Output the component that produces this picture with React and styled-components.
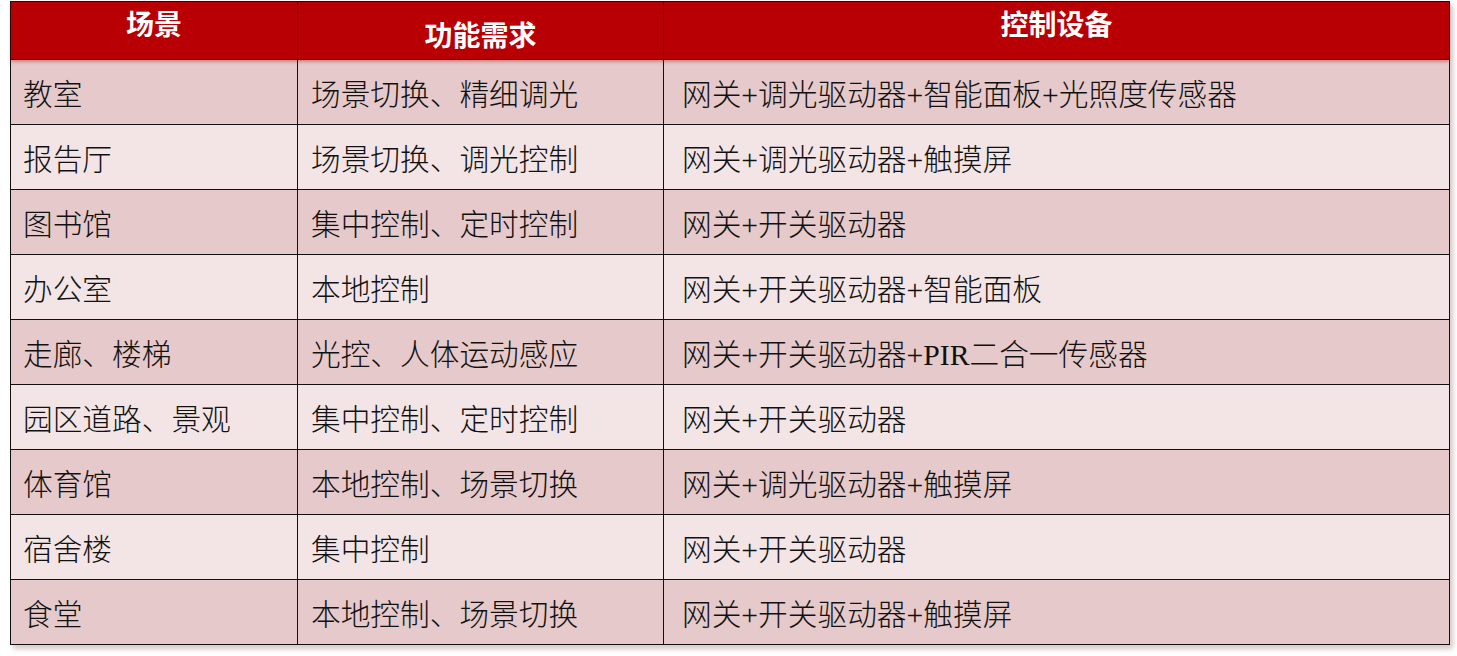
import styled, { createGlobalStyle } from "styled-components"

const GlobalStyle = createGlobalStyle`
  html, body {
    margin: 0;
    padding: 0;
    background: #ffffff;
  }
`

const rows = [
  ["教室", "场景切换、精细调光", "网关+调光驱动器+智能面板+光照度传感器"],
  ["报告厅", "场景切换、调光控制", "网关+调光驱动器+触摸屏"],
  ["图书馆", "集中控制、定时控制", "网关+开关驱动器"],
  ["办公室", "本地控制", "网关+开关驱动器+智能面板"],
  ["走廊、楼梯", "光控、人体运动感应", "网关+开关驱动器+PIR二合一传感器"],
  ["园区道路、景观", "集中控制、定时控制", "网关+开关驱动器"],
  ["体育馆", "本地控制、场景切换", "网关+调光驱动器+触摸屏"],
  ["宿舍楼", "集中控制", "网关+开关驱动器"],
  ["食堂", "本地控制、场景切换", "网关+开关驱动器+触摸屏"],
]

const headers = [
  { label: "场景", shift: -8 },
  { label: "功能需求", shift: 3 },
  { label: "控制设备", shift: -8 },
]

const App = () => {
  return (
    <Page>
      <GlobalStyle />
      <Table>
        <HeadRow>
          {headers.map((h, i) => (
            <HeadCell key={h.label} $last={i === 2}>
              <HeadText $shift={h.shift}>{h.label}</HeadText>
            </HeadCell>
          ))}
        </HeadRow>
        {rows.map((r, i) => (
          <Row key={r[0]} $odd={i % 2 === 0}>
            <Cell $pad={12}>{r[0]}</Cell>
            <Cell $pad={13}>{r[1]}</Cell>
            <Cell $pad={18} $last>{r[2]}</Cell>
          </Row>
        ))}
      </Table>
    </Page>
  )
}
export default App

const Page = styled.div`
  padding: 1px 0 0 10px;
  width: 1457px;
  height: 656px;
  box-sizing: border-box;
`

const Table = styled.div`
  width: 1440px;
  border: 1.5px solid #111;
  box-sizing: border-box;
  box-shadow: 3px 4px 5px rgba(90, 40, 40, 0.25);
  font-family: "Liberation Serif", "Noto Sans CJK SC", serif;
`

const cols = "287px 366px 1fr"

const HeadRow = styled.div`
  display: grid;
  grid-template-columns: ${cols};
  height: 57px;
  background: #b80004;
  border-bottom: 1.5px solid #111;
  box-shadow: 0 2px 3px rgba(184, 0, 4, 0.35);
  position: relative;
  z-index: 1;
`

const HeadCell = styled.div`
  display: flex;
  align-items: center;
  justify-content: center;
  border-right: ${p => (p.$last ? "none" : "1.5px solid #111")};
`

const HeadText = styled.span`
  color: #ffffff;
  font-size: 28px;
  font-weight: 700;
  transform: translateY(${p => p.$shift}px);
`

const Row = styled.div`
  display: grid;
  grid-template-columns: ${cols};
  height: 64px;
  background: ${p => (p.$odd ? "#e6c9ca" : "#f3e5e5")};
  border-bottom: 1.5px solid #111;
  &:last-child {
    border-bottom: none;
  }
`

const Cell = styled.div`
  display: flex;
  align-items: center;
  padding-left: ${p => p.$pad}px;
  font-size: 29.7px;
  font-weight: 300;
  color: #111;
  white-space: nowrap;
  border-right: ${p => (p.$last ? "none" : "1.5px solid #111")};
`
